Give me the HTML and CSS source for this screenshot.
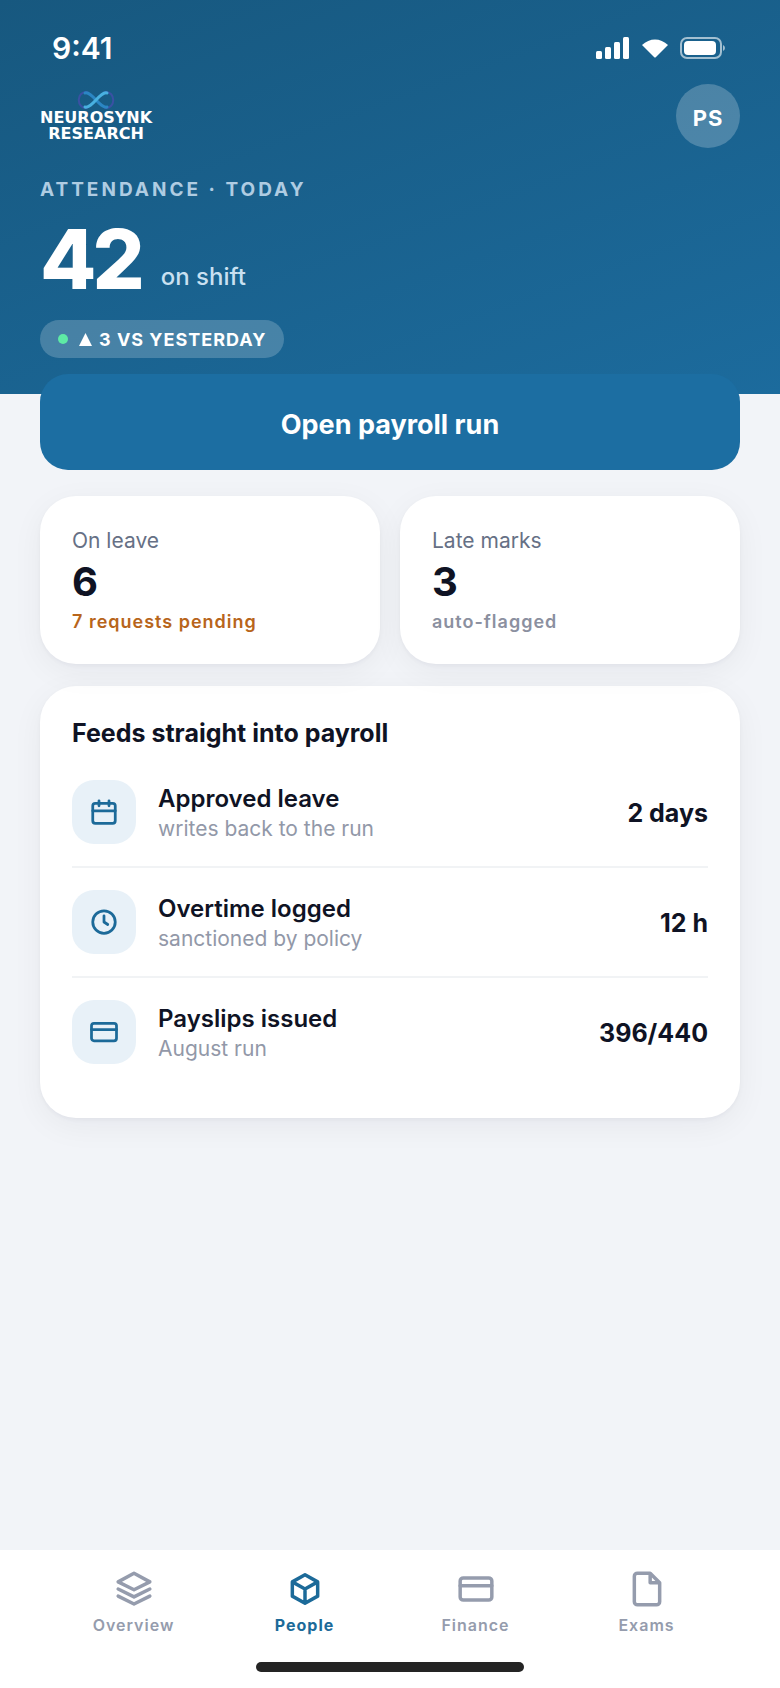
FILE: index.html
```html
<!DOCTYPE html>
<html lang="en">
<head>
    <meta charset="UTF-8">
    <meta name="viewport" content="width=device-width, initial-scale=1.0">
    <title>Attendance - Neurosynk Research</title>
    <link rel="stylesheet" href="styles.css">
</head>
<body>
    <header class="hero">
        <div class="status-bar">
            <span class="time">9:41</span>
            <div class="status-icons">
                <svg width="34" height="22" viewBox="0 0 34 22" fill="#fff">
                    <rect x="0" y="14" width="6" height="8" rx="1.5"/>
                    <rect x="9" y="10" width="6" height="12" rx="1.5"/>
                    <rect x="18" y="5" width="6" height="17" rx="1.5"/>
                    <rect x="27" y="0" width="6" height="22" rx="1.5"/>
                </svg>
                <svg width="26" height="19" viewBox="0 0 26 19" fill="#fff">
                    <path d="M0 6C7.500-1.500 18.500-1.500 26 6L14 18Q13 19 12 18Z"/>
                </svg>
                <svg width="46" height="22" viewBox="0 0 46 22">
                    <rect x="1" y="1" width="40" height="20" rx="6" fill="none" stroke="#fff" stroke-opacity=".6" stroke-width="2"/>
                    <rect x="4" y="4" width="32" height="14" rx="4" fill="#fff"/>
                    <path d="M43 8Q45 9 45 11T43 14Z" fill="#fff" fill-opacity=".6"/>
                </svg>
            </div>
        </div>

        <div class="top-bar">
            <div class="logo">
                <svg width="40" height="20" viewBox="0 0 40 20" fill="none" stroke-linecap="round">
                    <path stroke="#3a51a3" stroke-width="2" d="M11 2C0 1 0 19 11 18M29 2C40 1 40 19 29 18"/>
                    <path stroke="#2b86c4" stroke-width="3" d="M9 3C16 1 24 19 31 17"/>
                    <path stroke="#48b0e0" stroke-width="3" d="M9 17C16 19 24 1 31 3"/>
                </svg>
                <span>NEUROSYNK</span>
                <span>RESEARCH</span>
            </div>
            <button class="avatar" type="button">PS</button>
        </div>

        <h1 class="eyebrow">ATTENDANCE · TODAY</h1>
        <div class="headcount">
            <span class="headcount-value">42</span>
            <span class="headcount-label">on shift</span>
        </div>
        <div class="trend">
            <span class="trend-dot"></span>
            <svg width="13" height="13" viewBox="0 0 13 13" fill="#fff">
                <path d="M6.500 0L13 13H0Z"/>
            </svg>
            <span>3 VS YESTERDAY</span>
        </div>
    </header>

    <main class="content">
        <button class="primary-button" type="button">Open payroll run</button>

        <div class="stats">
            <section class="card stat">
                <div class="stat-label">On leave</div>
                <div class="stat-value">6</div>
                <div class="stat-note warning">7 requests pending</div>
            </section>
            <section class="card stat">
                <div class="stat-label">Late marks</div>
                <div class="stat-value">3</div>
                <div class="stat-note">auto-flagged</div>
            </section>
        </div>

        <section class="card feed">
            <h2>Feeds straight into payroll</h2>
            <ul class="feed-list">
                <li>
                    <span class="feed-icon">
                        <svg width="30" height="30" viewBox="0 0 24 24">
                            <rect x="3" y="5" width="18" height="16" rx="2"/>
                            <path d="M3 11h18M8 3v4M16 3v4"/>
                        </svg>
                    </span>
                    <div class="feed-text">
                        <div class="feed-title">Approved leave</div>
                        <div class="feed-sub">writes back to the run</div>
                    </div>
                    <span class="feed-value">2 days</span>
                </li>
                <li>
                    <span class="feed-icon">
                        <svg width="30" height="30" viewBox="0 0 24 24">
                            <circle cx="12" cy="12" r="9"/>
                            <path d="M12 7v5l3 2"/>
                        </svg>
                    </span>
                    <div class="feed-text">
                        <div class="feed-title">Overtime logged</div>
                        <div class="feed-sub">sanctioned by policy</div>
                    </div>
                    <span class="feed-value">12 h</span>
                </li>
                <li>
                    <span class="feed-icon">
                        <svg width="30" height="30" viewBox="0 0 24 24">
                            <rect x="2" y="5" width="20" height="14" rx="2"/>
                            <path d="M2 10h20"/>
                        </svg>
                    </span>
                    <div class="feed-text">
                        <div class="feed-title">Payslips issued</div>
                        <div class="feed-sub">August run</div>
                    </div>
                    <span class="feed-value">396/440</span>
                </li>
            </ul>
        </section>
    </main>

    <footer class="tab-bar">
        <nav class="tabs">
            <a href="#overview">
                <svg width="38" height="38" viewBox="0 0 24 24">
                    <path d="M12 2L2 7.500l10 5 10-5zM2 12l10 5 10-5M2 16.500l10 5 10-5"/>
                </svg>
                Overview
            </a>
            <a href="#people" class="active" aria-current="page">
                <svg width="38" height="38" viewBox="0 0 24 24">
                    <path d="M12 3l8 4.500v9L12 21l-8-4.500v-9zM4 7.500l8 4.500 8-4.500M12 12v9"/>
                </svg>
                People
            </a>
            <a href="#finance">
                <svg width="38" height="38" viewBox="0 0 24 24">
                    <rect x="2" y="5" width="20" height="14" rx="2"/>
                    <path d="M2 10h20"/>
                </svg>
                Finance
            </a>
            <a href="#exams">
                <svg width="38" height="38" viewBox="0 0 24 24">
                    <path d="M14 2H6a2 2 0 0 0-2 2v16a2 2 0 0 0 2 2h12a2 2 0 0 0 2-2V8zM14 2v6h6"/>
                </svg>
                Exams
            </a>
        </nav>
        <div class="home-indicator"></div>
    </footer>
</body>
</html>
```
FILE: styles.css
```css
* {
    box-sizing: border-box;
}
body {
    font-family: Inter, "Liberation Sans", sans-serif;
    background-color: #f2f4f8;
    color: #0f1324;
    margin: 0;
    display: flex;
    flex-direction: column;
    min-height: 100vh;
}
button {
    font-family: inherit;
    border: 0;
    cursor: pointer;
}
h1, h2 {
    margin: 0;
}

/* Hero */
.hero {
    background: linear-gradient(160deg, #17587f 0%, #1c6b9d 100%);
    color: #fff;
    padding: 28px 40px 36px;
}
.status-bar {
    display: flex;
    justify-content: space-between;
    align-items: center;
    height: 40px;
    padding: 0 14px 0 12px;
}
.time {
    font-size: 30px;
    font-weight: 600;
}
.status-icons {
    display: flex;
    align-items: center;
    gap: 12px;
}
.top-bar {
    display: flex;
    justify-content: space-between;
    align-items: center;
    margin-top: 16px;
}
.logo {
    display: flex;
    flex-direction: column;
    align-items: center;
    font-family: "DejaVu Sans", sans-serif;
    font-size: 16px;
    font-weight: 700;
    line-height: 16px;
}
.avatar {
    width: 64px;
    height: 64px;
    padding: 4px 0 0;
    border-radius: 50%;
    background-color: rgba(255, 255, 255, 0.22);
    color: #fff;
    font-size: 22px;
    font-weight: 700;
    letter-spacing: 1px;
}
.eyebrow {
    margin-top: 28px;
    color: #afcce2;
    font-size: 19px;
    font-weight: 700;
    line-height: 28px;
    letter-spacing: 3px;
}
.headcount {
    display: flex;
    align-items: flex-end;
    gap: 20px;
    margin-top: 14px;
}
.headcount-value {
    font-size: 82px;
    font-weight: 800;
    line-height: 84px;
    letter-spacing: -4px;
}
.headcount-label {
    color: #c9e0f1;
    font-size: 24px;
    font-weight: 500;
    line-height: 50px;
}
.trend {
    display: inline-flex;
    align-items: center;
    height: 38px;
    margin-top: 18px;
    padding: 0 18px;
    border-radius: 19px;
    background-color: rgba(255, 255, 255, 0.2);
    font-size: 18px;
    font-weight: 700;
    letter-spacing: 1px;
}
.trend-dot {
    width: 10px;
    height: 10px;
    margin-right: 11px;
    border-radius: 50%;
    background-color: #5eeaa5;
}
.trend svg {
    margin-right: 7px;
}

/* Content */
.content {
    flex: 1;
    padding: 0 40px 40px;
}
.primary-button {
    position: relative;
    display: block;
    width: 100%;
    height: 96px;
    margin-top: -20px;
    padding: 4px 0 0;
    border-radius: 28px;
    background-color: #1c6ea2;
    color: #fff;
    font-size: 27px;
    font-weight: 700;
}
.card {
    background-color: #fff;
    border-radius: 36px;
    box-shadow: 0 2px 4px rgba(16, 24, 40, 0.04), 0 8px 32px rgba(16, 24, 40, 0.05);
}
.stats {
    display: grid;
    grid-template-columns: 1fr 1fr;
    gap: 20px;
    margin-top: 26px;
}
.stat {
    padding: 32px 32px 30px;
}
.stat-label {
    color: #667085;
    font-size: 21px;
    line-height: 26px;
}
.stat-value {
    font-size: 40px;
    font-weight: 700;
    line-height: 52px;
    margin-top: 2px;
}
.stat-note {
    color: #8b90a0;
    font-size: 18px;
    font-weight: 600;
    line-height: 24px;
    letter-spacing: 1px;
    margin-top: 2px;
}
.warning {
    color: #b8651b;
}
.feed {
    margin-top: 22px;
    padding: 32px;
}
.feed h2 {
    font-size: 25px;
    font-weight: 700;
    line-height: 30px;
}
.feed-list {
    list-style: none;
    margin: 10px 0 0;
    padding: 0;
}
.feed-list li {
    display: flex;
    align-items: center;
    gap: 22px;
    padding: 22px 0;
    border-bottom: 2px solid #f1f3f5;
}
.feed-list li:last-child {
    border-bottom: 0;
}
.feed-icon {
    display: flex;
    justify-content: center;
    align-items: center;
    width: 64px;
    height: 64px;
    border-radius: 22px;
    background-color: #e8f1f8;
    color: #1c6a99;
}
.feed-icon svg, .tabs svg {
    fill: none;
    stroke: currentColor;
    stroke-width: 2.200;
    stroke-linecap: round;
    stroke-linejoin: round;
}
.feed-text {
    flex: 1;
    padding-top: 4px;
}
.feed-title {
    font-size: 24px;
    font-weight: 600;
    line-height: 30px;
}
.feed-sub {
    color: #9298a8;
    font-size: 21px;
    line-height: 30px;
}
.feed-value {
    padding-top: 2px;
    font-size: 25px;
    font-weight: 700;
}

/* Tab bar */
.tab-bar {
    background-color: #fff;
    padding: 20px 48px 16px;
}
.tabs {
    display: flex;
}
.tabs a {
    flex: 1;
    display: flex;
    flex-direction: column;
    align-items: center;
    gap: 6px;
    color: #959cad;
    font-size: 16px;
    font-weight: 600;
    line-height: 22px;
    letter-spacing: 1px;
    text-decoration: none;
}
.tabs a.active {
    color: #1c6a99;
    font-weight: 700;
}
.home-indicator {
    width: 268px;
    height: 10px;
    margin: 26px auto 0;
    border-radius: 5px;
    background-color: #242424;
}
```
